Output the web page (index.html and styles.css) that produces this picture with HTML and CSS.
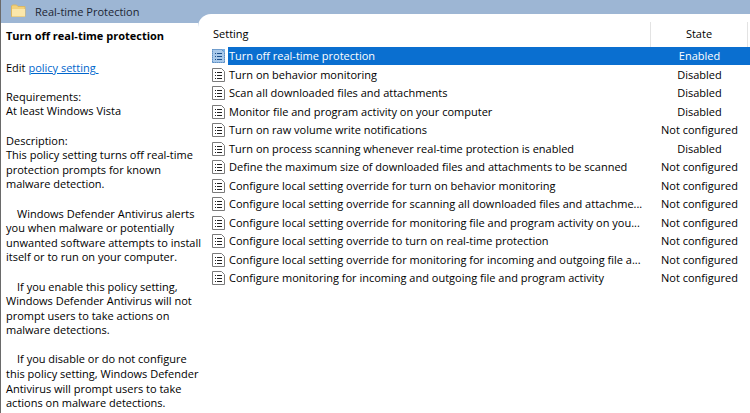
FILE: index.html
```html
<!DOCTYPE html>
<html lang="en">
<head>
<meta charset="utf-8">
<title>Real-time Protection</title>
<link rel="stylesheet" href="styles.css">
</head>
<body>
<div class="window">
  <svg width="0" height="0" class="defs">
    <symbol id="policy" viewBox="0 0 13 14">
      <path d="M.5.5h9l3 3v10H.5z" fill="#fff" stroke="#7a7a7a"/>
      <path d="M3 4h1v1H3zM5 4h5v1H5zM3 7h1v1H3zM5 7h5v1H5zM3 10h1v1H3zM5 10h5v1H5z" fill="#222"/>
    </symbol>
    <symbol id="policy-sel" viewBox="0 0 13 14">
      <rect width="13" height="14" fill="#78aee3"/>
      <path d="M.5.5h9l3 3v10H.5z" fill="#a9c9ea" stroke="#4f7fb5" stroke-dasharray="1 1"/>
      <path d="M3 4h1v1H3zM5 4h5v1H5zM3 7h1v1H3zM5 7h5v1H5zM3 10h1v1H3zM5 10h5v1H5z" fill="#1d4f8a"/>
    </symbol>
  </svg>
  <header class="titlebar">
    <svg class="folder" width="15" height="14" viewBox="0 0 15 14">
      <path d="M.5 12.500V2l1-1h4l1.500 1.500h7v10z" fill="#f3d27c" stroke="#d9b766"/>
      <path d="M1 5h13v7.500H1z" fill="#fbe7ab"/>
    </svg>
    <span class="titlebar-text">Real-time Protection</span>
  </header>
  <div class="body">
    <aside class="desc">
      <h1 class="desc-title">Turn off real-time protection</h1>
      <p class="para">Edit <a class="link" href="#">policy setting&nbsp;</a></p>
      <p class="para">Requirements:<br>At least Windows Vista</p>
      <p class="para">Description:<br>This policy setting turns off real-time protection prompts for known malware detection.</p>
      <p class="para indent">Windows Defender Antivirus alerts you when malware or potentially unwanted software attempts to install itself or to run on your computer.</p>
      <p class="para indent">If you enable this policy setting, Windows Defender Antivirus will not prompt users to take actions on malware detections.</p>
      <p class="para indent">If you disable or do not configure this policy setting, Windows Defender Antivirus will prompt users to take actions on malware detections.</p>
    </aside>
    <main class="panel">
      <div class="head">
        <div class="head-setting">Setting</div>
        <div class="head-state">State</div>
      </div>
      <div class="rows">
        <div class="row selected"><svg class="ico" width="13" height="14"><use href="#policy-sel"/></svg><span class="name">Turn off real-time protection</span><span class="state">Enabled</span></div>
        <div class="row"><svg class="ico" width="13" height="14"><use href="#policy"/></svg><span class="name">Turn on behavior monitoring</span><span class="state">Disabled</span></div>
        <div class="row"><svg class="ico" width="13" height="14"><use href="#policy"/></svg><span class="name">Scan all downloaded files and attachments</span><span class="state">Disabled</span></div>
        <div class="row"><svg class="ico" width="13" height="14"><use href="#policy"/></svg><span class="name">Monitor file and program activity on your computer</span><span class="state">Disabled</span></div>
        <div class="row"><svg class="ico" width="13" height="14"><use href="#policy"/></svg><span class="name">Turn on raw volume write notifications</span><span class="state">Not configured</span></div>
        <div class="row"><svg class="ico" width="13" height="14"><use href="#policy"/></svg><span class="name">Turn on process scanning whenever real-time protection is enabled</span><span class="state">Disabled</span></div>
        <div class="row"><svg class="ico" width="13" height="14"><use href="#policy"/></svg><span class="name">Define the maximum size of downloaded files and attachments to be scanned</span><span class="state">Not configured</span></div>
        <div class="row"><svg class="ico" width="13" height="14"><use href="#policy"/></svg><span class="name">Configure local setting override for turn on behavior monitoring</span><span class="state">Not configured</span></div>
        <div class="row"><svg class="ico" width="13" height="14"><use href="#policy"/></svg><span class="name">Configure local setting override for scanning all downloaded files and attachme...</span><span class="state">Not configured</span></div>
        <div class="row"><svg class="ico" width="13" height="14"><use href="#policy"/></svg><span class="name">Configure local setting override for monitoring file and program activity on you...</span><span class="state">Not configured</span></div>
        <div class="row"><svg class="ico" width="13" height="14"><use href="#policy"/></svg><span class="name">Configure local setting override to turn on real-time protection</span><span class="state">Not configured</span></div>
        <div class="row"><svg class="ico" width="13" height="14"><use href="#policy"/></svg><span class="name">Configure local setting override for monitoring for incoming and outgoing file a...</span><span class="state">Not configured</span></div>
        <div class="row"><svg class="ico" width="13" height="14"><use href="#policy"/></svg><span class="name">Configure monitoring for incoming and outgoing file and program activity</span><span class="state">Not configured</span></div>
      </div>
    </main>
  </div>
</div>
</body>
</html>
```

FILE: styles.css
```css
* { box-sizing: border-box; }
html, body { margin: 0; padding: 0; }
body { width: 750px; height: 413px; overflow: hidden; background: #fff; font-family: "Open Sans", "Noto Sans", sans-serif; font-size: 11px; color: #000; }
.defs { position: absolute; }
.window { width: 750px; height: 413px; border-left: 1px solid #6a6a6a; overflow: hidden; }
.titlebar { height: 23px; background: #9db6d4; display: flex; align-items: center; padding: 0 0 1px 10px; gap: 9px; }
.titlebar-text { color: #1c2533; }
.folder { flex: none; }
.body { display: flex; height: 390px; background: #9db6d4; }
.desc { width: 197px; flex: none; background: #fff; padding: 6px 0 0 5px; line-height: 14.6px; position: relative; z-index: 1; }
.desc-title { margin: 0 0 17px; font-size: 11px; font-weight: 700; line-height: 14.6px; }
.para { margin: 0 0 14.6px; width: 196px; }
.indent { text-indent: 11px; }
.link { color: #0066cc; }
.panel { flex: 1; background: #fff; border-radius: 13px 0 0 0; margin-top: -9px; padding-top: 8px; }
.head { display: flex; height: 25px; align-items: center; }
.head-setting { flex: 1; padding-left: 15px; height: 100%; border-right: 1px solid #e3e3e3; line-height: 24px; }
.head-state { width: 97px; text-align: center; height: 100%; border-right: 1px solid #e3e3e3; margin-right: 2px; line-height: 24px; }
.rows { display: flex; flex-direction: column; }
.row { height: 18.5px; display: flex; align-items: center; padding-left: 14px; }
.ico { flex: none; margin-right: 3px; }
.name { flex: 1; padding-left: 1px; line-height: 18px; white-space: nowrap; overflow: hidden; height: 18px; }
.state { width: 97px; text-align: center; line-height: 18px; flex: none; margin-right: 2px; }
.selected .name, .selected .state { background: #0a6fd0; color: #fff; }
.selected .state { margin-right: 0; width: 99px; padding-right: 2px; }
```
